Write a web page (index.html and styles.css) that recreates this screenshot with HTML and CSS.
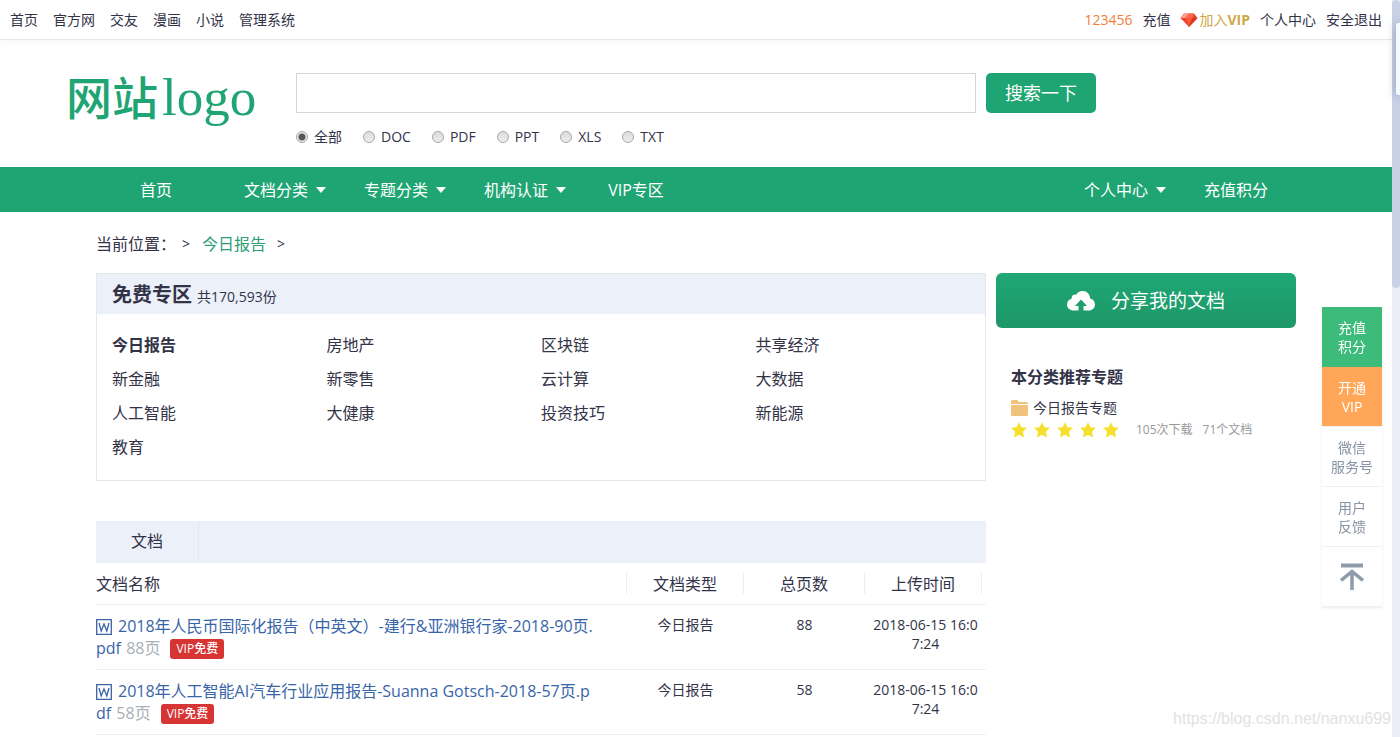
FILE: index.html
```html
<!DOCTYPE html>
<html lang="zh-CN">
<head>
<meta charset="utf-8">
<title>今日报告</title>
<link rel="stylesheet" href="styles.css">
</head>
<body>
<svg class="defs" aria-hidden="true">
  <symbol id="star" viewBox="0 0 16 16"><path d="M8 .2l2.500 5 5.400.6-3.900 3.900 1 5.800L8 12.800l-5 2.700 1-5.800L.1 5.800l5.400-.6z" fill="#f6e02e"/></symbol>
</svg>
<div class="page">
  <header class="topbar">
    <nav class="topbar-links">
      <a href="#">首页</a><a href="#">官方网</a><a href="#">交友</a><a href="#">漫画</a><a href="#">小说</a><a href="#">管理系统</a>
    </nav>
    <nav class="topbar-user">
      <a class="user-name" href="#">123456</a>
      <a href="#">充值</a>
      <a class="join-vip" href="#"><svg width="18" height="14" viewBox="0 0 18 14"><path d="M4 .5h10L17.500 5 9 14 .5 5z" fill="#e8432c"/><path d="M4 .5h5L5.500 5H.5z" fill="#f8a18e"/><path d="M9 .5h5L12.500 5h-7z" fill="#ff6a4d"/><path d="M5.500 5h7L9 14z" fill="#f95638"/><path d="M12.500 5h5L9 14z" fill="#d9351f"/></svg>加入<b>VIP</b></a>
      <a href="#">个人中心</a>
      <a href="#">安全退出</a>
    </nav>
  </header>

  <div class="container masthead">
    <a class="logo" href="#">网站<span class="logo-latin">logo</span></a>
    <form class="search">
      <div class="search-row">
        <input class="search-input" type="text" aria-label="搜索">
        <button class="search-button" type="button">搜索一下</button>
      </div>
      <div class="formats">
        <label><input type="radio" name="format" checked>全部</label>
        <label><input type="radio" name="format">DOC</label>
        <label><input type="radio" name="format">PDF</label>
        <label><input type="radio" name="format">PPT</label>
        <label><input type="radio" name="format">XLS</label>
        <label><input type="radio" name="format">TXT</label>
      </div>
    </form>
  </div>

  <div class="mainnav">
    <nav class="container mainnav-inner">
      <a href="#">首页</a>
      <a class="has-menu" href="#">文档分类</a>
      <a class="has-menu" href="#">专题分类</a>
      <a class="has-menu" href="#">机构认证</a>
      <a href="#">VIP专区</a>
      <a class="has-menu push" href="#">个人中心</a>
      <a href="#">充值积分</a>
    </nav>
  </div>

  <div class="container crumbs">
    <span class="crumb-label">当前位置：</span><span class="sep">&gt;</span><a href="#">今日报告</a><span class="sep">&gt;</span>
  </div>

  <div class="container columns">
    <main class="main">
      <section class="free">
        <h1 class="free-head">免费专区<small>共170,593份</small></h1>
        <div class="topics">
          <a class="current" href="#">今日报告</a><a href="#">房地产</a><a href="#">区块链</a><a href="#">共享经济</a>
          <a href="#">新金融</a><a href="#">新零售</a><a href="#">云计算</a><a href="#">大数据</a>
          <a href="#">人工智能</a><a href="#">大健康</a><a href="#">投资技巧</a><a href="#">新能源</a>
          <a href="#">教育</a>
        </div>
      </section>
      <section class="docs">
        <div class="tabs"><button class="tab" type="button">文档</button></div>
        <table class="doc-table">
          <thead>
            <tr>
              <th class="col-name"><span>文档名称</span></th>
              <th class="col-type"><span>文档类型</span></th>
              <th class="col-pages"><span>总页数</span></th>
              <th class="col-time"><span>上传时间</span></th>
            </tr>
          </thead>
          <tbody>
            <tr>
              <td class="name"><svg class="word" width="16" height="16" viewBox="0 0 16 16"><path d="M.7.7h14.600v14.600H.7zM3 4l2.200 8L8 5l2.800 7L13 4" fill="none" stroke="#3a63a3" stroke-width="1.300"/></svg><a href="#">2018年人民币国际化报告（中英文）-建行&amp;亚洲银行家-2018-90页.pdf</a> <span class="count">88页</span><span class="vip">VIP免费</span></td>
              <td>今日报告</td><td>88</td><td class="time">2018-06-15 16:07:24</td>
            </tr>
            <tr>
              <td class="name"><svg class="word" width="16" height="16" viewBox="0 0 16 16"><path d="M.7.7h14.600v14.600H.7zM3 4l2.200 8L8 5l2.800 7L13 4" fill="none" stroke="#3a63a3" stroke-width="1.300"/></svg><a href="#">2018年人工智能AI汽车行业应用报告-Suanna Gotsch-2018-57页.pdf</a> <span class="count">58页</span><span class="vip">VIP免费</span></td>
              <td>今日报告</td><td>58</td><td class="time">2018-06-15 16:07:24</td>
            </tr>
          </tbody>
        </table>
      </section>
    </main>

    <aside class="side">
      <button class="share" type="button"><svg width="28" height="20" viewBox="0 0 28 20"><path fill-rule="evenodd" d="M7 19.500C3 19.500 0 17 0 13.500c0-2.800 2-5 4.600-5.700C4.300 4.500 7 3 9.300 3.700 10.500 1.300 13 0 15.800.100c4.200.1 7.200 3.200 7.300 7.400 2.900.6 4.900 3 4.900 6 0 3.500-2.800 6-6.200 6h-5.300V15H20l-6-6.500L8 15h3.500v4.500z" fill="#fff"/></svg>分享我的文档</button>
      <section class="recommend">
        <h2>本分类推荐专题</h2>
        <a class="topic" href="#"><svg width="17" height="16" viewBox="0 0 17 16"><path d="M0 4V1.500Q0 0 1.500 0H6l2 2h7.500Q17 2 17 3.500V4zM0 5h17v9.500q0 1.500-1.500 1.500h-14Q0 16 0 14.500z" fill="#f0c37c"/></svg>今日报告专题</a>
        <div class="rating">
          <span class="stars"><svg><use href="#star"/></svg><svg><use href="#star"/></svg><svg><use href="#star"/></svg><svg><use href="#star"/></svg><svg><use href="#star"/></svg></span>
          <span>105次下载</span><span>71个文档</span>
        </div>
      </section>
    </aside>
  </div>

  <nav class="float">
    <a class="green" href="#">充值<br>积分</a>
    <a class="orange" href="#">开通<br>VIP</a>
    <a href="#">微信<br>服务号</a>
    <a href="#">用户<br>反馈</a>
    <a href="#" aria-label="返回顶部"><svg width="24" height="28" viewBox="0 0 24 28"><path d="M1 2.500h22" stroke="#8d9baa" stroke-width="4"/><path d="M12 27V10M1 17.500l11-9 11 9" fill="none" stroke="#8d9baa" stroke-width="3.500"/></svg></a>
  </nav>
  <div class="watermark">https://blog.csdn.net/nanxu699</div>
</div>
<div class="scroll"><div class="scroll-thumb"></div><div class="scroll-pop"></div></div>
</body>
</html>
```

FILE: styles.css
```css
* { box-sizing: border-box; }
body {
  margin: 0;
  min-height: 100vh;
  display: flex;
  position: relative;
  overflow-x: hidden;
  background: #fff;
  color: #333348;
  font: 14px/20px "Open Sans", "Noto Sans CJK SC", sans-serif;
}
a { color: inherit; text-decoration: none; }
button, input { font: inherit; }
button { border: 0; cursor: pointer; }
.defs { position: absolute; width: 0; height: 0; }
.page { flex: 1; min-width: 0; }
.container { max-width: 1200px; margin: 0 auto; }

.topbar {
  display: flex;
  justify-content: space-between;
  align-items: center;
  height: 40px;
  padding: 0 10px;
  border-bottom: 1px solid #e8e8e8;
  box-shadow: 0 2px 6px rgba(0, 0, 0, .03);
}
.topbar-links { display: flex; gap: 15px; }
.topbar-user { display: flex; gap: 10px; }
.user-name { color: #f0803a; }
.join-vip { display: flex; align-items: center; color: #cfa848; }
.join-vip svg { margin-right: 1px; }

.masthead { display: flex; height: 127px; padding-top: 33px; }
.logo {
  display: flex;
  align-items: baseline;
  gap: 4px;
  width: 230px;
  margin-left: -30px;
  color: #1fa573;
  font-size: 46px;
  font-weight: 500;
  line-height: 48px;
  white-space: nowrap;
}
.logo-latin { font-family: "Liberation Serif", serif; font-size: 53px; line-height: 40px; }
.search { flex: 1; }
.search-row { display: flex; gap: 10px; }
.search-input { width: 680px; height: 40px; padding: 0 10px; border: 1px solid #d5d5d5; background: #fff; }
.search-button { width: 110px; height: 40px; border-radius: 5px; background: #1fa573; color: #fff; font-size: 18px; }
.formats { display: flex; gap: 21px; margin-top: 14px; }
.formats label { display: flex; align-items: center; gap: 6px; }
.formats input {
  appearance: none;
  width: 12px;
  height: 12px;
  margin: 0;
  border: 1px solid #a8a8a8;
  border-radius: 50%;
  background: linear-gradient(#dcdcdc, #eee);
}
.formats input:checked { background: radial-gradient(circle, #555 3px, #e8e8e8 4px); }

.mainnav { background: #1fa573; color: #fff; font-size: 16px; }
.mainnav-inner { display: flex; height: 45px; line-height: 46px; }
.mainnav a { width: 120px; text-align: center; }
.mainnav .has-menu { display: flex; align-items: center; gap: 8px; padding-left: 28px; }
.has-menu::after { content: ""; border: 5px solid transparent; border-top: 6px solid #fff; border-bottom: 0; }
.mainnav .push { margin-left: auto; }

.crumbs { display: flex; align-items: center; height: 61px; padding-top: 2px; font-size: 16px; line-height: 22px; }
.crumbs a { color: #2f9e74; }
.crumbs .sep { padding: 1px 12px 0 11px; font-size: 14px; }
.crumbs .crumb-label + .sep { padding-left: 6px; }

.columns { display: flex; gap: 10px; }
.main { flex: 1; min-width: 0; }
.free { border: 1px solid #e5e8ea; }
.free-head { display: flex; align-items: baseline; height: 40px; margin: 0; padding: 0 15px; background: #ecf0f8; font-size: 20px; line-height: 42px; }
.free-head small { margin-left: 5px; font-size: 14px; font-weight: 400; }
.topics { display: grid; grid-template-columns: repeat(4, 1fr); padding: 14px 15px 16px; font-size: 16px; line-height: 34px; }
.topics .current { font-weight: 700; }

.docs { margin-top: 40px; }
.tabs { height: 42px; background: #ecf0f8; }
.tab { width: 103px; height: 40px; background: none; border-right: 1px solid #e4e7ea; color: inherit; font-size: 16px; }
.doc-table { width: 100%; border-collapse: collapse; table-layout: fixed; text-align: center; }
.doc-table tr { border-bottom: 1px solid #eef1f3; }
.doc-table th { padding: 9px 0 10px; font-size: 16px; font-weight: 400; }
.doc-table th span { display: block; height: 22px; line-height: 24px; border-right: 1px solid #eceff1; }
.doc-table td { padding: 10px 0; line-height: 19px; vertical-align: top; }
.doc-table .col-name { width: 531px; text-align: left; }
.col-type { width: 117px; }
.col-pages { width: 121px; }
.doc-table .col-time { padding-right: 4px; }
.doc-table .time { padding: 10px 4px; word-break: break-all; }
.doc-table .name { padding-right: 30px; color: #3865a8; font-size: 16px; line-height: 22px; text-align: left; word-break: break-all; }
.word { margin-right: 6px; vertical-align: -3px; }
.count { margin-left: 1px; color: #aab0b6; }
.vip {
  display: inline-block;
  margin-left: 10px;
  padding: 0 6px;
  border-radius: 3px;
  background: #d73434;
  color: #fff;
  font-size: 12px;
  font-weight: 500;
  line-height: 20px;
  vertical-align: bottom;
}

.side { width: 300px; }
.share {
  display: flex;
  align-items: center;
  justify-content: center;
  gap: 16px;
  width: 100%;
  height: 55px;
  border-radius: 6px;
  background: linear-gradient(#1fa775, #1d9768);
  color: #fff;
  font-size: 19px;
}
.recommend { padding: 38px 15px; }
.recommend h2 { margin: 0 0 10px; font-size: 16px; line-height: 22px; }
.topic { display: flex; align-items: center; gap: 5px; }
.rating { display: flex; align-items: center; gap: 10px; margin-top: 2px; color: #999; font-size: 12px; }
.stars { display: flex; gap: 7px; margin-right: 7px; }
.stars svg { width: 16px; height: 16px; }

.float {
  position: fixed;
  top: 307px;
  right: 18px;
  width: 60px;
  background: #fff;
  box-shadow: 0 1px 3px rgba(0, 0, 0, .08);
  color: #8793a3;
  line-height: 19px;
  text-align: center;
}
.float a { display: flex; align-items: center; justify-content: center; height: 60px; border-bottom: 1px solid #eef0f2; }
.float .green { background: #3cbb7b; border: 0; color: #fff; }
.float .orange { background: #ffa659; color: #fff; }
.watermark { position: absolute; right: 9px; bottom: 8px; color: #e2e2e2; font: 16px/20px "Liberation Sans", sans-serif; }

.scroll { position: relative; width: 8px; background: #ebeef7; }
.scroll-thumb { height: 288px; border-radius: 4px; background: #c7d2e7; }
.scroll-pop { position: absolute; top: 23px; right: 0; width: 4px; height: 72px; border-radius: 2px 0 0 2px; background: #f5faff; box-shadow: 0 1px 8px rgba(60, 70, 100, .5); }
```
